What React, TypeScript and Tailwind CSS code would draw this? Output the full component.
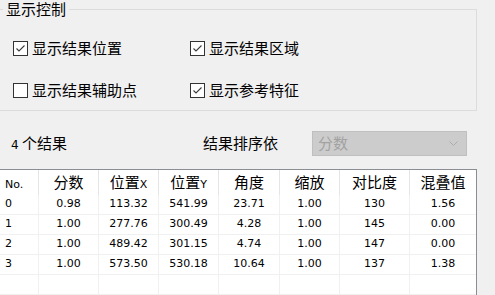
const cjk = { fontFamily: '"Noto Sans CJK SC", "Noto Sans", sans-serif' };
const latin = { fontFamily: '"DejaVu Sans", "Noto Sans CJK SC", sans-serif' };

function CheckBox({ checked, label }: { checked: boolean; label: string }) {
  return (
    <div className="flex items-center h-[20px]">
      <span className="w-[15px] h-[15px] border border-[#333333] bg-white flex items-center justify-center">
        {checked && (
          <svg width="13" height="13" viewBox="0 0 13 13">
            <polyline points="2.5,6.5 5,9 10.5,3.5" fill="none" stroke="#3c3c3c" strokeWidth="1.1" />
          </svg>
        )}
      </span>
      <span className="ml-[4px] text-[15px] leading-[20px] text-black" style={cjk}>
        {label}
      </span>
    </div>
  );
}

const cols = ['w-[39px]', 'w-[60px]', 'w-[60px]', 'w-[60px]', 'w-[61px]', 'w-[60px]', 'w-[70px]', 'w-[66px]'];

const rows = [
  ['0', '0.98', '113.32', '541.99', '23.71', '1.00', '130', '1.56'],
  ['1', '1.00', '277.76', '300.49', '4.28', '1.00', '145', '0.00'],
  ['2', '1.00', '489.42', '301.15', '4.74', '1.00', '147', '0.00'],
  ['3', '1.00', '573.50', '530.18', '10.64', '1.00', '137', '1.38'],
  ['', '', '', '', '', '', '', ''],
];

function HeaderCell({ i, children }: { i: number; children: React.ReactNode }) {
  return (
    <div
      className={`${cols[i]} h-[25px] flex items-center ${i === 0 ? 'pl-[5px]' : 'justify-center'} ${
        i < 7 ? 'border-r border-[#e5e5e5]' : ''
      } text-[15px] text-black`}
      style={cjk}
    >
      <span>{children}</span>
    </div>
  );
}

export default function App() {
  return (
    <div className="w-[495px] h-[295px] bg-[#f0f0f0] overflow-hidden select-none">
      {/* 显示控制 */}
      <fieldset className="ml-[-1px] w-[478px] h-[111px] border border-[#dcdcdc]">
        <legend className="ml-[3px] px-[3px] text-[15px] leading-[18px] text-black" style={cjk}>
          显示控制
        </legend>
        <div className="grid grid-cols-[177px_1fr] gap-y-[22px] pt-[20px] pl-[13px]">
          <CheckBox checked label="显示结果位置" />
          <CheckBox checked label="显示结果区域" />
          <CheckBox checked={false} label="显示结果辅助点" />
          <CheckBox checked label="显示参考特征" />
        </div>
      </fieldset>

      {/* results + sort */}
      <div className="flex items-center h-[25px] mt-[20px] text-[15px] text-black" style={cjk}>
        <div className="w-[203px] pl-[11px]">
          <span className="text-[12px]" style={latin}>4</span> 个结果
        </div>
        <div className="w-[109px]">结果排序依</div>
        <div className="w-[155px] h-[25px] bg-[#cccccc] border border-[#bfbfbf] flex items-center justify-between pl-[5px] pr-[8px] text-[#a2a2a2]">
          <span>分数</span>
          <svg width="9" height="6" viewBox="0 0 9 6">
            <polyline points="0.5,0.5 4.5,4.5 8.5,0.5" fill="none" stroke="#acacac" strokeWidth="1" />
          </svg>
        </div>
      </div>

      {/* table */}
      <div className="mt-[13px] ml-[-1px] w-[478px] h-[140px] border border-[#8a8d93] bg-white">
        <div className="flex">
          <HeaderCell i={0}>
            <span className="text-[11px]" style={latin}>No.</span>
          </HeaderCell>
          <HeaderCell i={1}>分数</HeaderCell>
          <HeaderCell i={2}>
            位置<span className="text-[11px]" style={latin}>X</span>
          </HeaderCell>
          <HeaderCell i={3}>
            位置<span className="text-[11px]" style={latin}>Y</span>
          </HeaderCell>
          <HeaderCell i={4}>角度</HeaderCell>
          <HeaderCell i={5}>缩放</HeaderCell>
          <HeaderCell i={6}>对比度</HeaderCell>
          <HeaderCell i={7}>混叠值</HeaderCell>
        </div>
        {rows.map((r, ri) => (
          <div key={ri} className="flex border-b border-[#f0f0f0]">
            {r.map((v, i) => (
              <div
                key={i}
                className={`${cols[i]} h-[19px] flex items-center ${i === 0 ? 'pl-[5px]' : 'justify-center'} ${
                  i < 7 ? 'border-r border-[#f0f0f0]' : ''
                } text-[11px] text-black`}
                style={latin}
              >
                {v}
              </div>
            ))}
          </div>
        ))}
      </div>
    </div>
  );
}
